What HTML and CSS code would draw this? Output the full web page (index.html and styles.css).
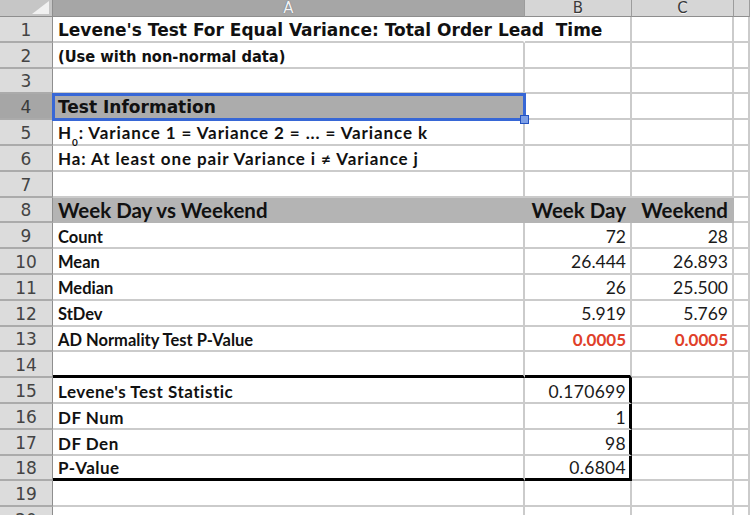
FILE: index.html
```html
<!DOCTYPE html>
<html lang="en">
<head>
  <meta charset="UTF-8">
  <meta name="viewport" content="width=device-width, initial-scale=1.0">
  <title>Levene's Test</title>
  <link rel="stylesheet" href="styles.css">
</head>
<body>
  <div class="sheet">
    <div class="row head">
      <div class="corner"><span class="tri"></span></div>
      <div class="col-h sel"><span>A</span></div>
      <div class="col-h"><span>B</span></div>
      <div class="col-h"><span>C</span></div>
      <div class="col-h"></div>
    </div>

    <div class="row">
      <div class="num">1</div>
      <div class="cell vd open">Levene's Test For Equal Variance: Total Order Lead&nbsp; Time</div>
      <div class="cell"></div><div class="cell"></div><div class="cell"></div>
    </div>
    <div class="row">
      <div class="num">2</div>
      <div class="cell vd note">(Use with non-normal data)</div>
      <div class="cell"></div><div class="cell"></div><div class="cell"></div>
    </div>
    <div class="row">
      <div class="num">3</div>
      <div class="cell"></div><div class="cell"></div><div class="cell"></div><div class="cell"></div>
    </div>
    <div class="row">
      <div class="num sel">4</div>
      <div class="cell vd active">Test Information<span class="handle"></span></div>
      <div class="cell"></div><div class="cell"></div><div class="cell"></div>
    </div>
    <div class="row">
      <div class="num">5</div>
      <div class="cell hyp">H<sub>0</sub>: Variance 1 = Variance 2 = ... = Variance k</div>
      <div class="cell"></div><div class="cell"></div><div class="cell"></div>
    </div>
    <div class="row">
      <div class="num">6</div>
      <div class="cell hyp">Ha: At least one pair Variance i ≠ Variance j</div>
      <div class="cell"></div><div class="cell"></div><div class="cell"></div>
    </div>
    <div class="row">
      <div class="num">7</div>
      <div class="cell"></div><div class="cell"></div><div class="cell"></div><div class="cell"></div>
    </div>
    <div class="row">
      <div class="num">8</div>
      <div class="cell band big">Week Day vs Weekend</div>
      <div class="cell band big r">Week Day</div>
      <div class="cell band big r">Weekend</div>
      <div class="cell"></div>
    </div>
    <div class="row">
      <div class="num">9</div>
      <div class="cell">Count</div>
      <div class="cell r val">72</div>
      <div class="cell r val">28</div>
      <div class="cell"></div>
    </div>
    <div class="row">
      <div class="num">10</div>
      <div class="cell">Mean</div>
      <div class="cell r val">26.444</div>
      <div class="cell r val">26.893</div>
      <div class="cell"></div>
    </div>
    <div class="row">
      <div class="num">11</div>
      <div class="cell">Median</div>
      <div class="cell r val">26</div>
      <div class="cell r val">25.500</div>
      <div class="cell"></div>
    </div>
    <div class="row">
      <div class="num">12</div>
      <div class="cell">StDev</div>
      <div class="cell r val">5.919</div>
      <div class="cell r val">5.769</div>
      <div class="cell"></div>
    </div>
    <div class="row">
      <div class="num">13</div>
      <div class="cell">AD Normality Test P-Value</div>
      <div class="cell r red">0.0005</div>
      <div class="cell r red">0.0005</div>
      <div class="cell"></div>
    </div>
    <div class="row">
      <div class="num">14</div>
      <div class="cell box-top"></div>
      <div class="cell box-top"></div>
      <div class="cell"></div><div class="cell"></div>
    </div>
    <div class="row">
      <div class="num">15</div>
      <div class="cell sm">Levene's Test Statistic</div>
      <div class="cell r val sm box-r">0.170699</div>
      <div class="cell"></div><div class="cell"></div>
    </div>
    <div class="row">
      <div class="num">16</div>
      <div class="cell sm">DF Num</div>
      <div class="cell r val sm box-r">1</div>
      <div class="cell"></div><div class="cell"></div>
    </div>
    <div class="row">
      <div class="num">17</div>
      <div class="cell sm">DF Den</div>
      <div class="cell r val sm box-r">98</div>
      <div class="cell"></div><div class="cell"></div>
    </div>
    <div class="row">
      <div class="num">18</div>
      <div class="cell sm box-top">P-Value</div>
      <div class="cell r val sm box-r box-top">0.6804</div>
      <div class="cell"></div><div class="cell"></div>
    </div>
    <div class="row">
      <div class="num">19</div>
      <div class="cell"></div><div class="cell"></div><div class="cell"></div><div class="cell"></div>
    </div>
    <div class="row">
      <div class="num">20</div>
      <div class="cell"></div><div class="cell"></div><div class="cell"></div><div class="cell"></div>
    </div>
  </div>
</body>
</html>
```

FILE: styles.css
```css
:root {
  --grid: #cbcbcb;
  --hdr: #d6d6d6;
  --hdr-sel: #a6a6a6;
  --band: #b4b4b4;
  --blue: #3767d6;
}
body {
  margin: 0;
  background: #fff;
  height: 515px;
  overflow: hidden;
}
.sheet { width: 750px; }

.row {
  display: grid;
  grid-template-columns: 53px 472px 107px 102px 1fr;
  height: 25.8px;
}
.row.head { height: 17px; }

/* column headers */
.corner {
  background: #c6c6c6;
  border-right: 1px solid #8e8e8e;
  border-bottom: 1px solid #8e8e8e;
  box-sizing: border-box;
  position: relative;
}
.corner .tri {
  position: absolute;
  right: 3px;
  bottom: 2px;
  width: 17px;
  height: 13px;
  background: #f1f1f1;
  clip-path: polygon(100% 0, 100% 100%, 0 100%);
}
.col-h {
  background: var(--hdr);
  border-right: 1px solid #9c9c9c;
  border-bottom: 1px solid #8e8e8e;
  box-sizing: border-box;
  display: flex;
  justify-content: center;
  align-items: flex-end;
}
.col-h span {
  font: 15px/15px "DejaVu Sans", sans-serif;
  color: #3a3a3a;
  text-shadow: 0 1px 0 #f4f4f4;
}
.col-h.sel { background: var(--hdr-sel); }
.col-h.sel span { color: #f4f4f4; text-shadow: 0 0 1px #44506a; }

/* row headers */
.num {
  background: #dcdcdc;
  border-right: 1px solid #8e8e8e;
  border-bottom: 2px solid #ababab;
  box-sizing: border-box;
  display: flex;
  justify-content: center;
  align-items: flex-end;
  padding-bottom: 2px;
  font: 17px/17px "DejaVu Sans", sans-serif;
  color: #444;
}
.num.sel { background: var(--hdr-sel); color: #3a3a3a; }

/* cells */
.cell {
  border-right: 2px solid var(--grid);
  border-bottom: 2px solid var(--grid);
  box-sizing: border-box;
  display: flex;
  align-items: flex-end;
  padding: 0 4px 2px 5px;
  white-space: nowrap;
  min-width: 0;
  font: bold 16.5px/16.5px "Lato", sans-serif;
  color: #111;
}
.cell sub {
  font-size: 10px;
  line-height: 0;
  vertical-align: -2px;
}
.cell.r { justify-content: flex-end; }
.cell.val { font-weight: 400; font-size: 17.5px; color: #1a1a1a; }
.cell.red { font-weight: 700; font-size: 17px; color: #e0402a; }
.cell.vd {
  font: bold 17px/17px "DejaVu Sans", sans-serif;
  padding-bottom: 2px;
}
.cell.note {
  font-family: "DejaVu Sans Condensed", "DejaVu Sans", sans-serif;
  font-size: 16.3px;
}
.cell.hyp { font-size: 17px; letter-spacing: 0.9px; }
.cell.open { border-right-color: #fff; }
.cell.big { font-size: 20.5px; line-height: 20.5px; padding-bottom: 1px; }
.cell.sm { font-size: 17px; line-height: 17px; letter-spacing: 0.5px; }
.cell.val.sm { font-size: 17.5px; letter-spacing: 0.3px; }
.cell.band {
  background: var(--band);
  border-color: var(--band);
}

.cell.active {
  background: #acacac;
  position: relative;
  outline: 3px solid var(--blue);
  outline-offset: -2px;
}
.handle {
  position: absolute;
  right: -6px;
  bottom: -6px;
  width: 7px;
  height: 7px;
  background: #7d9fe6;
  border: 1px solid #2452c0;
}

/* thick outline around the Levene results */
.cell.box-top { border-bottom: 3px solid #000; }
.cell.box-r { border-right: 3px solid #000; padding-right: 3px; }
```
